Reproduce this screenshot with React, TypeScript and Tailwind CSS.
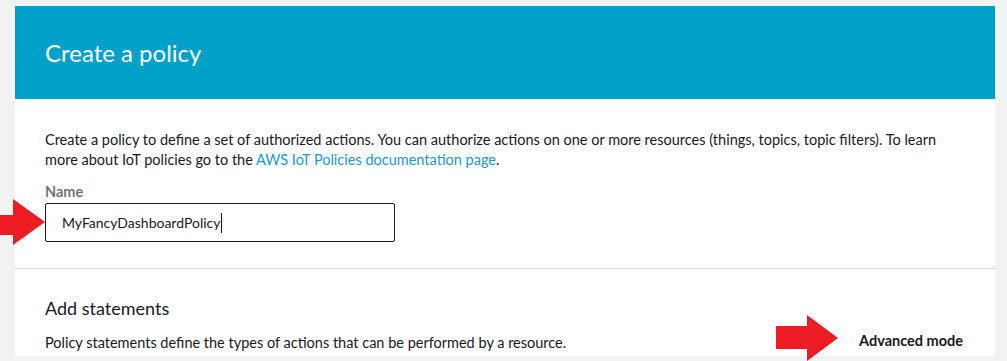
export default function App() {
  const font = { fontFamily: '"Lato", "Liberation Sans", sans-serif' }
  return (
    <div className="relative h-[361px] w-[1007px] overflow-hidden bg-[#f2f2f2] pl-[15px] pt-[6px]" style={font}>
      <div className="w-[980px] bg-white">
        {/* Header */}
        <div className="flex h-[93px] items-center bg-[#00a1c9] pl-[30px]">
          <h1 className="text-[24px] font-normal text-white">Create a policy</h1>
        </div>

        {/* Policy name */}
        <div className="border-b border-[#d5dbdb] px-[30px] pb-[26px] pt-[31px]">
          <p className="text-[14.5px] leading-[20px] text-[#16191f]">
            Create a policy to define a set of authorized actions. You can authorize actions on one or more resources (things, topics, topic filters). To learn more about IoT policies go to the{" "}
            <span className="text-[#1b9ad1]">AWS IoT Policies documentation page</span>.
          </p>
          <div className="mt-[12px] text-[14.5px] font-bold leading-[20px] text-[#737373]">Name</div>
          <div className="mt-[1px] flex h-[39px] w-[350px] items-center rounded-[2px] border border-[#16191f] pl-[16px] text-[14px] text-[#16191f]">
            MyFancyDashboardPolicy
            <span className="ml-[1px] h-[20px] w-px bg-[#16191f]" />
          </div>
        </div>

        {/* Statements */}
        <div className="px-[30px] pt-[27px]">
          <h2 className="text-[18px] font-normal leading-[24px] text-[#16191f]">Add statements</h2>
          <div className="mt-[10px] flex items-center justify-between pr-[2px]">
            <p className="text-[14.5px] leading-[20px] text-[#16191f]">
              Policy statements define the types of actions that can be performed by a resource.
            </p>
            <span className="mb-[4px] text-[14.5px] font-bold text-[#16191f]">Advanced mode</span>
          </div>
        </div>
      </div>

      {/* Annotation arrows */}
      <svg className="absolute left-0 top-[199px]" width="46" height="46" viewBox="0 0 46 46">
        <polygon points="0,16 13,16 13,0 45,23 13,46 13,36 0,36" fill="#ed1c24" />
      </svg>
      <svg className="absolute left-[776px] top-[315px]" width="63" height="46" viewBox="0 0 63 46">
        <polygon points="0,11 31,11 31,0 62,23 31,46 31,34 0,34" fill="#ed1c24" />
      </svg>
    </div>
  )
}
